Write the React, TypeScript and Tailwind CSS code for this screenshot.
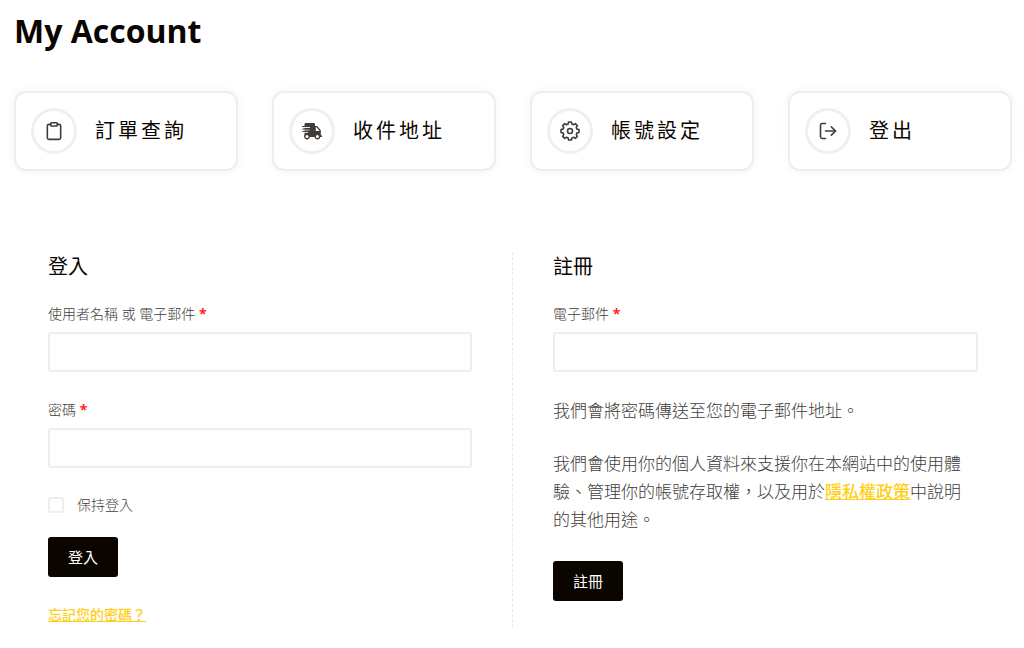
import type { ReactNode } from 'react';
import { FiClipboard, FiLogOut } from 'react-icons/fi';

function TruckIcon() {
  return (
    <svg viewBox="0 0 20 17" className="w-5 h-[17px]" fill="currentColor" aria-hidden="true">
      <path d="M3.8 0h7.9a1.3 1.3 0 0 1 1.3 1.3V3h1.6c.4 0 .8.2 1.1.5l2.7 3.2c.3.3.4.6.4 1v4.2l1.2.8v1.3H2.5V1.3A1.3 1.3 0 0 1 3.8 0z" />
      <path fill="#fff" d="M13.8 4.3h.8L17.6 8h-3.8z" />
      <path stroke="#fff" strokeWidth="0.9" fill="none" d="M1.5 4.5H8M1.5 7H7.4M1.5 9.4H6" />
      <path stroke="currentColor" strokeWidth="1" fill="none" d="M0 3.5H8M.4 6h7M.4 8.4h5.6" />
      <circle cx="5" cy="13.6" r="2.8" />
      <circle cx="15.4" cy="13.6" r="2.8" />
      <circle cx="5" cy="13.6" r="1.5" fill="#fff" />
      <circle cx="15.4" cy="13.6" r="1.5" fill="#fff" />
    </svg>
  );
}

function GearIcon() {
  const tooth = [[-15, 7.2], [-9, 9.1], [9, 9.1], [15, 7.2]];
  const points = Array.from({ length: 8 }, (_, i) =>
    tooth.map(([deg, r]) => {
      const a = ((i * 45 + deg) * Math.PI) / 180;
      return `${(10 + r * Math.sin(a)).toFixed(2)},${(10 - r * Math.cos(a)).toFixed(2)}`;
    }).join(' ')
  ).join(' ');

  return (
    <svg viewBox="0 0 20 20" className="size-5" fill="none" stroke="currentColor" strokeWidth="1.6" strokeLinejoin="round" aria-hidden="true">
      <polygon points={points} />
      <circle cx="10" cy="10" r="2.5" />
    </svg>
  );
}

const links: { label: string; icon: ReactNode }[] = [
  { label: '訂單查詢', icon: <FiClipboard className="size-5 stroke-[1.9]" /> },
  { label: '收件地址', icon: <TruckIcon /> },
  { label: '帳號設定', icon: <GearIcon /> },
  { label: '登出', icon: <FiLogOut className="size-5 stroke-[1.9]" /> },
];

function Field({ id, label, type }: { id: string; label: string; type: string }) {
  return (
    <div>
      <label htmlFor={id} className="block mb-[6px] text-[14px] leading-6">
        {label} <span className="font-bold text-[#ff1f1f]">*</span>
      </label>
      <input
        id={id}
        type={type}
        className="block w-full h-10 px-3 border-2 border-[#eeeeee] rounded-[3px] bg-white outline-none"
      />
    </div>
  );
}

function SubmitButton({ children }: { children: ReactNode }) {
  return (
    <button type="submit" className="block h-10 px-5 rounded-[3px] bg-[#0b0500] text-white text-[15px] font-normal">
      {children}
    </button>
  );
}

export default function App() {
  return (
    <main className="bg-white pb-5 font-['Open_Sans','Noto_Sans_CJK_TC',sans-serif] font-light text-[#403c38]">
      <div className="pl-[14px] pr-3 pt-2">
        <h1 className="text-[32px] leading-[46px] font-bold text-[#0b0500]">My Account</h1>

        <nav className="grid grid-cols-4 gap-[34px] mt-[37px]">
          {links.map(({ label, icon }) => (
            <a
              key={label}
              href="#"
              className="flex items-center gap-[18px] h-20 px-[15px] border-2 border-[#edeef0] rounded-xl bg-white shadow-[0_0_10px_#eff3f8]"
            >
              <span className="flex shrink-0 items-center justify-center size-[46px] border-3 border-[#eeeff2] rounded-full">
                {icon}
              </span>
              <span className="text-[20px] font-normal tracking-[3px] text-[#0b0500]">{label}</span>
            </a>
          ))}
        </nav>
      </div>

      <div className="grid grid-cols-2 mt-[81px] pl-2 pr-[6px]">
        {/* Login */}
        <form className="px-10 border-r border-dashed border-[#e8e8e8]">
          <h2 className="text-[20px] leading-[30px] font-normal text-[#0b0500]">登入</h2>
          <div className="flex flex-col gap-[26px] mt-5">
            <Field id="username" label="使用者名稱 或 電子郵件" type="text" />
            <Field id="password" label="密碼" type="password" />
          </div>
          <label className="flex items-center gap-[13px] mt-[26px] text-[14px] leading-[22px]">
            <input type="checkbox" className="appearance-none size-4 border-2 border-[#eeeeee] rounded-[3px] checked:bg-[#fecf14]" />
            保持登入
          </label>
          <div className="mt-[21px]">
            <SubmitButton>登入</SubmitButton>
          </div>
          <p className="mt-[26px] text-[14px] leading-6">
            <a href="#" className="font-medium text-[#fecf14] underline">忘記您的密碼？</a>
          </p>
        </form>

        {/* Register */}
        <form className="px-10">
          <h2 className="text-[20px] leading-[30px] font-normal text-[#0b0500]">註冊</h2>
          <div className="mt-5">
            <Field id="email" label="電子郵件" type="email" />
          </div>
          <div className="flex flex-col gap-[25px] mt-[25px] pr-3 text-[17px] leading-7">
            <p>我們會將密碼傳送至您的電子郵件地址。</p>
            <p>
              我們會使用你的個人資料來支援你在本網站中的使用體驗、管理你的帳號存取權，以及用於<a href="#" className="font-medium text-[#fecf14] underline">隱私權政策</a>中說明的其他用途。
            </p>
          </div>
          <div className="mt-[27px]">
            <SubmitButton>註冊</SubmitButton>
          </div>
        </form>
      </div>
    </main>
  );
}
